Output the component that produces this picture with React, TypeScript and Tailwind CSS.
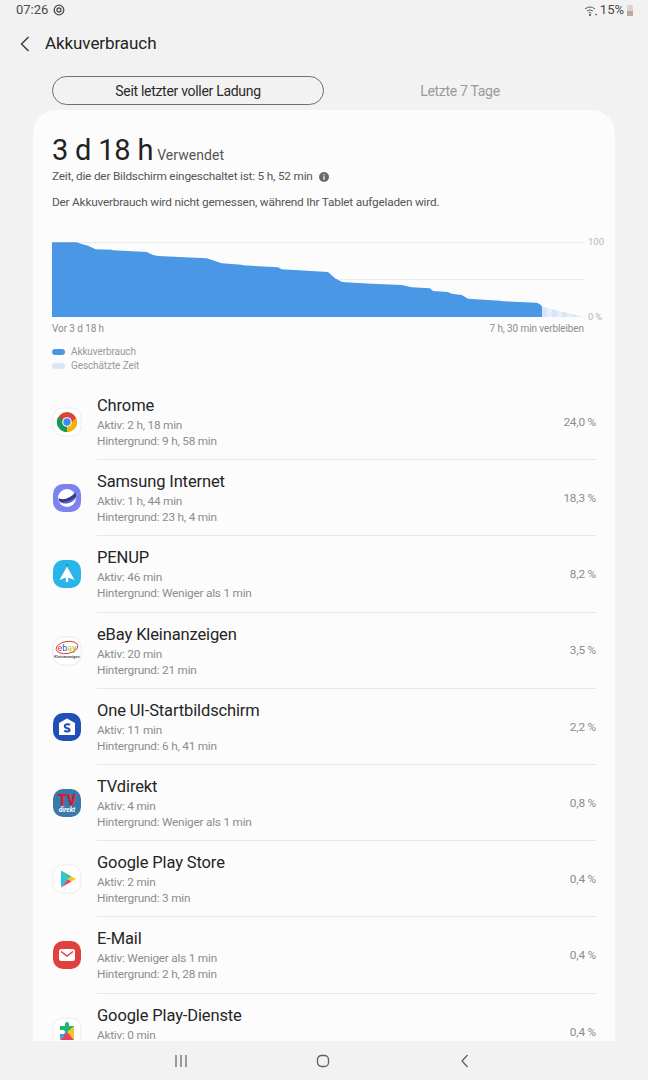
import type { ReactNode } from "react";

function IconBase({ children, outline }: { children: ReactNode; outline?: boolean }) {
  return (
    <svg width="30" height="30" viewBox="0 0 30 30" className="shrink-0">
      <rect x="1" y="1" width="28" height="28" rx="10" fill="#ffffff" stroke={outline ? "#ececec" : "none"} />
      {children}
    </svg>
  );
}

function ChromeIcon() {
  return (
    <IconBase outline>
      <circle cx="15" cy="15" r="10" fill="#db4437" />
      <path d="M15 15 L6.3 10 A10 10 0 0 0 15 25 L20 15 Z" fill="#0f9d58" />
      <path d="M15 15 L20 15 L24 11 A10 10 0 0 1 15 25 Z" fill="#f4b400" />
      <circle cx="15" cy="15" r="4.8" fill="#ffffff" />
      <circle cx="15" cy="15" r="3.7" fill="#4285f4" />
    </IconBase>
  );
}

function SamsungInternetIcon() {
  return (
    <svg width="30" height="30" viewBox="0 0 30 30" className="shrink-0">
      <rect x="1" y="1" width="28" height="28" rx="10" fill="#7c82ee" />
      <circle cx="15" cy="15" r="9" fill="#ffffff" />
      <path d="M6.5 15 C11 18 19 15 23 9.5 C25 12 24 15 22 17 C18 21 10 21.5 7 18 Z" fill="#34398f" />
      <path d="M7 18 C11 20 18 18.5 22.5 14.5 L22 17 C18 21.5 10 22 7 18 Z" fill="#7c82ee" opacity="0.6" />
    </svg>
  );
}

function PenupIcon() {
  return (
    <svg width="30" height="30" viewBox="0 0 30 30" className="shrink-0">
      <rect x="1" y="1" width="28" height="28" rx="10" fill="#29b5e8" />
      <path d="M15 7.5 L22.5 21 L16.2 18.5 L16.2 23 L13.8 23 L13.8 18.5 L7.5 21 Z" fill="#ffffff" />
      <rect x="14.4" y="5.5" width="1.2" height="1.4" fill="#0f5f85" />
    </svg>
  );
}

function EbayIcon() {
  return (
    <IconBase outline>
      <ellipse cx="15" cy="11.5" rx="11" ry="6" fill="none" stroke="#c8343c" strokeWidth="0.9" transform="rotate(-10 15 11.5)" />
      <text x="15" y="14.5" textAnchor="middle" fontSize="9" fontFamily="Roboto, sans-serif">
        <tspan fill="#e53238">e</tspan>
        <tspan fill="#0064d2">b</tspan>
        <tspan fill="#f5af02">a</tspan>
        <tspan fill="#86b817">y</tspan>
      </text>
      <text x="15" y="22" textAnchor="middle" fontSize="4" fontWeight="700" fill="#555555" fontFamily="Roboto, sans-serif">
        Kleinanzeigen
      </text>
    </IconBase>
  );
}

function OneUiIcon() {
  return (
    <svg width="30" height="30" viewBox="0 0 30 30" className="shrink-0">
      <rect x="1" y="1" width="28" height="28" rx="10" fill="#1f4fb8" />
      <path d="M15 6.5 L23 11 L23 23 L7 23 L7 11 Z" fill="#ffffff" />
      <path d="M18 12.8 C16.5 11.8 12.8 12 12.8 14.3 C12.8 16.9 17.6 15.8 17.6 18 C17.6 19.8 14 19.8 12.3 18.6" fill="none" stroke="#1f4fb8" strokeWidth="2" />
    </svg>
  );
}

function TvDirektIcon() {
  return (
    <svg width="30" height="30" viewBox="0 0 30 30" className="shrink-0">
      <rect x="1" y="1" width="28" height="28" rx="10" fill="#3c79ab" />
      <text x="15" y="16.5" textAnchor="middle" fontSize="14" fontWeight="900" fill="#d8192e" fontFamily="Roboto, sans-serif">
        TV
      </text>
      <text x="15" y="23.5" textAnchor="middle" fontSize="6.5" fontWeight="700" fontStyle="italic" fill="#ffffff" fontFamily="Roboto, sans-serif">
        direkt
      </text>
    </svg>
  );
}

function PlayStoreIcon() {
  return (
    <IconBase outline>
      <path d="M9 6.5 L16 15 L9 23.5 Z" fill="#23c5e8" />
      <path d="M9 6.5 L19.5 12.5 L16 15 Z" fill="#34c576" />
      <path d="M9 23.5 L19.5 17.5 L16 15 Z" fill="#e8435a" />
      <path d="M19.5 12.5 L24 15 L19.5 17.5 L16 15 Z" fill="#fbc02d" />
    </IconBase>
  );
}

function MailIcon() {
  return (
    <svg width="30" height="30" viewBox="0 0 30 30" className="shrink-0">
      <rect x="1" y="1" width="28" height="28" rx="10" fill="#e0413f" />
      <rect x="7" y="9" width="16" height="12" rx="2.5" fill="#ffffff" />
      <path d="M9 11.5 L15 16 L21 11.5" fill="none" stroke="#e0413f" strokeWidth="1.5" />
    </svg>
  );
}

function PlayServicesIcon() {
  return (
    <IconBase outline>
      <path d="M13 7 A2 2 0 0 1 17 7 L17 9 L22 9 L22 15 L15 22 L8 15 L8 9 L13 9 Z" fill="#1fb573" />
      <path d="M15 15 L22 9 L22 23 Z" fill="#fbc02d" />
      <path d="M8 23 L15 15 L22 23 Z" fill="#e8435a" />
      <path d="M8 15 L15 15 L8 23 Z" fill="#29a9e8" />
      <path d="M8 13 L11 13 A2 2 0 0 1 11 17 L8 17 Z" fill="#ffffff" />
    </IconBase>
  );
}

const apps = [
  { name: "Chrome", active: "Aktiv: 2 h, 18 min", bg: "Hintergrund: 9 h, 58 min", pct: "24,0 %", icon: <ChromeIcon /> },
  { name: "Samsung Internet", active: "Aktiv: 1 h, 44 min", bg: "Hintergrund: 23 h, 4 min", pct: "18,3 %", icon: <SamsungInternetIcon /> },
  { name: "PENUP", active: "Aktiv: 46 min", bg: "Hintergrund: Weniger als 1 min", pct: "8,2 %", icon: <PenupIcon /> },
  { name: "eBay Kleinanzeigen", active: "Aktiv: 20 min", bg: "Hintergrund: 21 min", pct: "3,5 %", icon: <EbayIcon /> },
  { name: "One UI-Startbildschirm", active: "Aktiv: 11 min", bg: "Hintergrund: 6 h, 41 min", pct: "2,2 %", icon: <OneUiIcon /> },
  { name: "TVdirekt", active: "Aktiv: 4 min", bg: "Hintergrund: Weniger als 1 min", pct: "0,8 %", icon: <TvDirektIcon /> },
  { name: "Google Play Store", active: "Aktiv: 2 min", bg: "Hintergrund: 3 min", pct: "0,4 %", icon: <PlayStoreIcon /> },
  { name: "E-Mail", active: "Aktiv: Weniger als 1 min", bg: "Hintergrund: 2 h, 28 min", pct: "0,4 %", icon: <MailIcon /> },
  { name: "Google Play-Dienste", active: "Aktiv: 0 min", bg: "", pct: "0,4 %", icon: <PlayServicesIcon /> },
];

const usagePath =
  "M52 242.3 L76.7 242.3 L81.7 244 L88 245.7 L95.7 249.3 L111.7 249.7 L113 250.3 L146.7 252 L153 255 L158 256 L206.7 258.3 L221.7 263.3 L241.7 264.7 L243 265.3 L278 267.3 L281.7 269.3 L328 272 L335 278.3 L341.7 281.7 L345 282.3 L371.7 283.7 L401.7 285 L411.7 287.3 L430 288.3 L433 291 L448 292 L451.7 293.7 L461.7 295 L468 298.7 L500 300.7 L503 301.3 L536.7 302.7 L540 304.3 L542.3 306.7 L542.3 317 L52 317 Z";

function BatteryChart() {
  return (
    <svg width="582" height="88" viewBox="33 235 582 88" className="block">
      <defs>
        <pattern id="estimate" x="542" y="0" width="10" height="10" patternUnits="userSpaceOnUse">
          <rect width="10" height="10" fill="#d6e6f9" />
          <rect x="5" width="5" height="10" fill="#e6f0fb" />
        </pattern>
      </defs>
      <line x1="52" y1="242.5" x2="584" y2="242.5" stroke="#ececec" />
      <line x1="52" y1="279.5" x2="584" y2="279.5" stroke="#ececec" />
      <path d={usagePath} fill="#4a98e5" />
      <path d="M542.3 306.7 L584 317 L542.3 317 Z" fill="url(#estimate)" />
      <text x="588" y="245" fontSize="9.5" fill="#b5b5b5">100</text>
      <text x="588" y="320" fontSize="9.5" fill="#b5b5b5">0{"\u2009"}%</text>
    </svg>
  );
}

function AppRow({ app, last }: { app: (typeof apps)[number]; last: boolean }) {
  return (
    <div className="flex h-[76.2px] shrink-0 items-center px-[19px]">
      <div className="w-[45px] shrink-0">{app.icon}</div>
      <div className={`flex h-full flex-1 items-center justify-between ${last ? "" : "border-b border-[#e6e6e6]"}`}>
        <div>
          <div className="pt-[1px] text-[16.5px] leading-[22px] tracking-[-0.13px] text-[#252525]">{app.name}</div>
          <div className="text-[11.8px] leading-[16px] tracking-[-0.22px] text-[#8c8c8c]">{app.active}</div>
          <div className="h-4 text-[11.8px] leading-[16px] tracking-[-0.22px] text-[#8c8c8c]">{app.bg}</div>
        </div>
        <div className="pt-[2px] text-[11.8px] tracking-[-0.2px] text-[#8c8c8c]">{app.pct}</div>
      </div>
    </div>
  );
}

export default function App() {
  return (
    <div className="flex h-[1080px] w-[648px] flex-col overflow-hidden bg-[#f2f2f2] font-['Roboto',sans-serif]">
      {/* status bar */}
      <div className="flex h-5 shrink-0 items-center justify-between pl-[16px] pr-[15px] text-[13px] text-[#4a4a4a]">
        <div className="flex items-center gap-[5px]">
          <span>07:26</span>
          <svg width="12" height="12" viewBox="0 0 12 12" fill="none" stroke="#4a4a4a">
            <circle cx="6" cy="6" r="4.8" strokeWidth="1.3" />
            <circle cx="6" cy="6" r="2" strokeWidth="1.3" />
          </svg>
        </div>
        <div className="flex items-center gap-[3px]">
          <svg width="13" height="11" viewBox="0 0 13 11" fill="none" stroke="#5a5a5a" strokeWidth="1">
            <path d="M1 4 A8 8 0 0 1 11 4" />
            <path d="M3 6 A5 5 0 0 1 9 6" />
            <path d="M4.7 8 A2.4 2.4 0 0 1 7.3 8" />
            <circle cx="6" cy="10" r="0.7" fill="#5a5a5a" />
            <circle cx="12" cy="9.5" r="0.5" fill="#5a5a5a" />
          </svg>
          <span>15%</span>
          <div className="relative h-[11px] w-[6px] rounded-[1px] bg-[#d9d4d0]">
            <div className="absolute bottom-0 left-0 h-[5px] w-full bg-[#c0a89c]" />
          </div>
        </div>
      </div>

      {/* header */}
      <div className="flex h-[46px] shrink-0 items-center pl-[20px] pt-[2px]">
        <svg width="10" height="16" viewBox="0 0 10 16" fill="none" stroke="#3a3a3a" strokeWidth="1.4">
          <path d="M8.5 1 L1.5 8 L8.5 15" />
        </svg>
        <span className="ml-[15px] text-[17px] tracking-[-0.08px] text-[#252525]">Akkuverbrauch</span>
      </div>

      {/* tabs */}
      <div className="mt-[10px] flex h-[29px] shrink-0 items-center pl-[52px]">
        <div className="flex h-full w-[272px] items-center justify-center rounded-full border border-[#6e6e6e] pt-[1px] text-[14px] tracking-[-0.3px] text-[#2b2b2b]">
          Seit letzter voller Ladung
        </div>
        <div className="w-[272px] pt-[1px] text-center text-[14px] tracking-[-0.3px] text-[#9a9a9a]">Letzte 7 Tage</div>
      </div>

      {/* card */}
      <div className="mx-[33px] mt-[5px] flex min-h-0 flex-1 flex-col overflow-hidden rounded-t-[24px] bg-[#fcfcfc]">
        <div className="shrink-0 px-[19px] pt-[22px]">
          <div className="flex items-baseline gap-[4px]">
            <span className="text-[29px] leading-[36px] tracking-[-0.2px] text-[#222222]">3 d 18 h</span>
            <span className="text-[14px] tracking-[0.05px] text-[#555555]">Verwendet</span>
          </div>
          <div className="flex items-center gap-[6px] text-[11.8px] leading-[17px] tracking-[-0.2px] text-[#555555]">
            <span>Zeit, die der Bildschirm eingeschaltet ist: 5 h, 52 min</span>
            <svg width="10" height="10" viewBox="0 0 10 10">
              <circle cx="5" cy="5" r="5" fill="#6a6a6a" />
              <rect x="4.4" y="4.2" width="1.2" height="3.6" fill="#ffffff" />
              <rect x="4.4" y="2.2" width="1.2" height="1.2" fill="#ffffff" />
            </svg>
          </div>
          <div className="mt-[9px] text-[11.8px] leading-[17px] tracking-[-0.2px] text-[#555555]">
            Der Akkuverbrauch wird nicht gemessen, während Ihr Tablet aufgeladen wird.
          </div>
        </div>

        <div className="mt-[24px] shrink-0">
          <BatteryChart />
        </div>
        <div className="flex shrink-0 justify-between pl-[19px] pr-[31px] text-[10px] leading-[12px] tracking-[-0.1px] text-[#8c8c8c]">
          <span>Vor 3 d 18 h</span>
          <span>7 h, 30 min verbleiben</span>
        </div>

        <div className="mt-[10px] flex shrink-0 flex-col pl-[19px] text-[10px] leading-[14px] tracking-[-0.1px] text-[#9a9a9a]">
          <div className="flex items-center gap-[6px]">
            <span className="h-[6px] w-[13px] rounded-full bg-[#4a98e5]" />
            Akkuverbrauch
          </div>
          <div className="flex items-center gap-[6px]">
            <span className="h-[6px] w-[13px] rounded-full bg-[#d9e6f7]" />
            Geschätzte Zeit
          </div>
        </div>

        <div className="mt-[11px] flex flex-col">
          {apps.map((app, i) => (
            <AppRow key={app.name} app={app} last={i === apps.length - 1} />
          ))}
        </div>
      </div>

      {/* nav bar */}
      <div className="flex h-[39px] shrink-0 items-center justify-center pr-[2px]">
        <div className="flex w-[142px] justify-center">
          <svg width="14" height="14" viewBox="0 0 14 14" stroke="#5f5f5f" strokeWidth="1.2">
            <path d="M2 1 V13 M7 1 V13 M12 1 V13" />
          </svg>
        </div>
        <div className="flex w-[142px] justify-center">
          <svg width="14" height="14" viewBox="0 0 14 14" fill="none" stroke="#5f5f5f" strokeWidth="1.3">
            <rect x="1.5" y="1.5" width="11" height="11" rx="4" />
          </svg>
        </div>
        <div className="flex w-[142px] justify-center">
          <svg width="10" height="14" viewBox="0 0 10 14" fill="none" stroke="#5f5f5f" strokeWidth="1.3">
            <path d="M7.5 1 L2 7 L7.5 13" />
          </svg>
        </div>
      </div>
    </div>
  );
}
